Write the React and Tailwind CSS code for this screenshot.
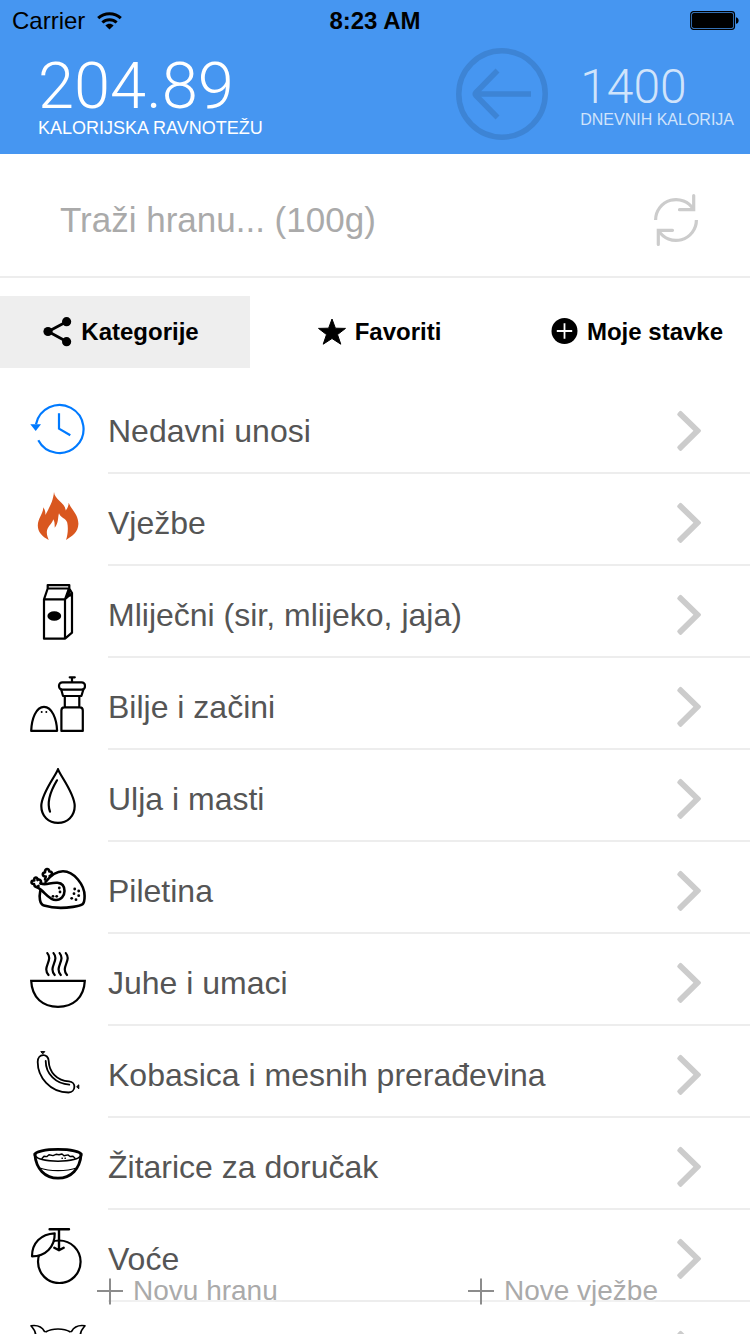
import React from "react";

const line = {
  fill: "none",
  stroke: "#000",
  strokeWidth: 2.2,
  strokeLinecap: "round",
  strokeLinejoin: "round",
};

function Dots({ points, r }) {
  return points.map(([x, y]) => (
    <circle key={`${x}-${y}`} cx={x} cy={y} r={r} fill="#000" stroke="none" />
  ));
}

const icons = {
  recent: (
    <g fill="none" stroke="#007aff" strokeWidth="2.2">
      <path d="M6 24.3A24 24 0 1 1 8.3 40.2" />
      <path d="M29 13.3V28.7L40.3 35.3" />
      <path d="M.3 24.3H11L5.7 31Z" fill="#007aff" stroke="none" />
    </g>
  ),
  exercise: (
    <path
      fill="#d9571f"
      d="M24 0C24.3 7.5 35.3 10.5 35.7 18.5C37.5 16 38.6 14 38.7 10.7C41 17 48.5 22.5 48.4 32C48.2 40 42 44.5 36 47.9C37.8 43 38.4 36 37.2 30.5C35.8 26 30.4 26 29 21.3C27.6 26 28.8 31 24.7 35.7C24.7 32 24.8 30 23.3 27.3C22 32 17.2 34.5 16.8 40C16.8 43 17.8 45.5 18.7 47.9C12 44.5 7.8 40 7.8 33.5C8 26 13 22.5 13.3 15.3C15 18 15.5 20 15.4 23C19 16 23 10 24 0Z"
    />
  ),
  milk: (
    <g {...line}>
      <path d="M14 15.3H35V54.7H14ZM17.7 1.1H39.3V4.5H17.7ZM17.7 4.5L14 15.3M39 4.5L35 15.3L42 9V48.7L35 54.7M39.3 4.5L42 9M39.6 7.5L38 10.5L40 11.5" />
      <ellipse cx="24.3" cy="32" rx="5.8" ry="3.6" fill="#000" />
    </g>
  ),
  spices: (
    <g {...line}>
      <path d="M1.2 54.9C1.6 43 6 30.8 14 30.8S26.7 43 27.1 54.9Z" />
      <path d="M31.4 54.9V34.5Q31.4 31.3 34.4 31.3H49.8Q52.8 31.3 52.8 34.5V54.9ZM34.8 31.3V20H49.3V31.3M31.3 13.7L33 20H51.4L53.3 13.7M42 1.3V6M39.7 1.3H44.8" />
      <rect x="29" y="6.3" width="26" height="7.3" rx="3.4" />
      <Dots r={1} points={[[11.7, 36], [16.3, 36]]} />
    </g>
  ),
  oil: (
    <g {...line}>
      <path d="M28 1.1C27 6 11.3 25 11.3 38C11.3 48 18.5 54.9 28 54.9S44.7 48 44.7 38C44.7 25 29 6 28 1.1Z" />
      <path d="M27 12.3C20 24 16.3 34 20 43.7" />
    </g>
  ),
  chicken: (
    <g {...line} strokeWidth="2.6">
      <path d="M15.5 22C21 15 26 11.3 33 11.3C44 11.3 54.6 25 54.6 36C54.6 45 53 45.5 43 46.9C34 48.3 22 48 14 45.5C9.5 44 9 37 10.3 30.8" />
      <path d="M10.6 23.6C17 25.5 20 22.3 27.5 22.8C33 23.3 34.5 27 34.5 31C34.5 36 31 40 26 40C18 40 14 30 7 27.2" />
      <path d="M10.6 23.4C12 20 9 18.8 7.5 20C7.8 16.5 3.5 16.5 4.3 20.5C.6 20 .6 24.5 4 24C4.5 27 6.5 28 8.5 26" />
      <path d="M15 19.5L15.8 16.5C12.5 16.8 11.5 13 15 12.2C14.8 8.5 19 7.8 19.3 11.5C23 11 22.5 15.3 19.7 16" />
      <Dots
        r={1.4}
        points={[
          [29.3, 28], [30, 32], [26.7, 36.3], [23, 36.3], [44.7, 29], [48.7, 31],
          [44, 33.7], [48.7, 35.7], [41.7, 38.3], [46, 39.7],
        ]}
      />
    </g>
  ),
  soup: (
    <g {...line}>
      <path d="M1.2 28.9H54.8C54 46 43 54.8 28 54.8S2 46 1.2 28.9Z" strokeLinejoin="miter" />
      <path d="M17.3 1.1C23.6 8.5 11.6 15 18.5 23M23.5 1.1C29.8 8.5 17.8 15 24.7 23M29.6 1.1C35.9 8.5 23.9 15 30.8 23M35.8 1.1C42.1 8.5 30.1 15 37 23" />
    </g>
  ),
  sausage: (
    <g {...line} strokeWidth="1.8">
      <path d="M7.7 18C7.7 9 18.5 9 18.7 17C19 28 27 37 39 37.3C46.5 37.8 46 48.3 38.5 48.5C20 48.5 7.7 33 7.7 18Z" />
      <path d="M15.7 17C15.7 30 26 40 39.3 40.7" />
      <path d="M11.2 7.6H14.8L13 9.6ZM46.9 42.5L48.8 40.8V44.4Z" fill="#000" strokeWidth="1" />
    </g>
  ),
  cereal: (
    <g {...line}>
      <path d="M5 19C4 11.5 52 11.5 51 19" strokeWidth="2.8" />
      <path d="M4.8 18C6 33 15 42.2 28 42.2S50 33 51.2 18" strokeWidth="2.8" />
      <path d="M5.2 19.5C9 27 47 27 50.8 19.5" strokeWidth="1.5" />
      <path d="M9 31.7C20 35.6 36 35.6 47.3 31.7" strokeWidth="1.2" />
      <path d="M12 22.5L14 20.2L17 20.6L19 18.7L23 19.6L26 18.3L29 18.8L32 18L34 19.8L38 18.9L40 20.5L43 20.3L45 22.3M32 22.2H32.4M35 22.2H35.4" strokeWidth="1.4" />
    </g>
  ),
  fruit: (
    <g {...line}>
      <circle cx="29.3" cy="33.8" r="21.3" />
      <path d="M29 1.2V22M19.6 1.2H39M24.3 19.7L29 22.2L33.7 19.7" strokeWidth="2.4" />
      <path d="M2 28.3C2 15 11 6 24.7 5.3C25 19 15.5 28.3 2 28.3Z" fill="#fff" />
    </g>
  ),
  meat: (
    <g {...line} strokeWidth="1.6">
      <path d="M5.5 14C5.5 10.5 3 8.5 1 5.8C7.5 4.8 12 7 14.5 11.5M50.5 14C50.5 10.5 53 8.5 55 5.8C48.5 4.8 44 7 41.5 11.5M16 11.8C22 8 34 8 40 11.8" />
      <path d="M5.5 14C0 24 8 46 28 46S56 24 50.5 14" />
    </g>
  ),
};

const categories = [
  { icon: "recent", label: "Nedavni unosi" },
  { icon: "exercise", label: "Vježbe" },
  { icon: "milk", label: "Mliječni (sir, mlijeko, jaja)" },
  { icon: "spices", label: "Bilje i začini" },
  { icon: "oil", label: "Ulja i masti" },
  { icon: "chicken", label: "Piletina" },
  { icon: "soup", label: "Juhe i umaci" },
  { icon: "sausage", label: "Kobasica i mesnih prerađevina" },
  { icon: "cereal", label: "Žitarice za doručak" },
  { icon: "fruit", label: "Voće" },
  { icon: "meat", label: "" },
];

function StatusBar() {
  return (
    <div className="grid h-[42px] grid-cols-3 items-center px-3 text-2xl text-black">
      <div className="flex items-center gap-3">
        <span>Carrier</span>
        <svg width="25" height="18" viewBox="0 0 25 18" aria-hidden="true">
          <g fill="none" stroke="#000" strokeWidth="3">
            <path d="M1.2 6.2C7.5.1 17.5.1 23.8 6.2" />
            <path d="M5.4 10.5C9.4 6.7 15.6 6.7 19.6 10.5" />
          </g>
          <path d="M8.4 13.4C10.8 11.3 14.2 11.3 16.6 13.4L12.5 17.6Z" />
        </svg>
      </div>
      <span className="text-center font-bold">8:23 AM</span>
      <svg className="-mr-0.5 justify-self-end" width="50" height="20" viewBox="0 0 50 20" aria-hidden="true">
        <rect x=".7" y=".7" width="43.8" height="17.6" rx="2.8" fill="none" stroke="#000" strokeWidth="1.2" />
        <rect x="2" y="2" width="41.2" height="15" rx="1.8" />
        <path d="M46 6.2C49.5 6.6 49.5 12.4 46 12.8Z" />
      </svg>
    </div>
  );
}

function Header() {
  return (
    <header className="shrink-0 bg-[#4696f1] text-white">
      <StatusBar />
      <div className="flex h-28 items-start justify-between pr-4 pl-[38px]">
        <div className="pt-3">
          <div className="font-['Roboto',sans-serif] text-[65px] leading-16 font-light">204.89</div>
          <div className="text-lg leading-5">KALORIJSKA RAVNOTEŽU</div>
        </div>
        <div className="flex items-start gap-8">
          <button type="button" aria-label="Natrag" className="pt-1.5">
            <svg width="92" height="92" viewBox="0 0 92 92" fill="none" stroke="#3d84d5" strokeWidth="5.5">
              <circle cx="46" cy="46" r="43.2" />
              <path d="M75 46H20M41.5 22.5L20 44.5Q18.6 46 20 47.5L41.5 69.5" strokeLinejoin="round" />
            </svg>
          </button>
          <div className="pt-5 text-white/75">
            <div className="font-['Roboto',sans-serif] text-5xl leading-[50px] font-light">1400</div>
            <div className="text-base leading-4">DNEVNIH KALORIJA</div>
          </div>
        </div>
      </div>
    </header>
  );
}

function SearchBar() {
  return (
    <form className="flex h-[124px] shrink-0 items-center border-b-2 border-[#ededed] pt-[10px] pr-[51px] pl-[60px]">
      <input
        type="text"
        aria-label="Traži hranu"
        placeholder="Traži hranu... (100g)"
        className="min-w-0 flex-1 bg-transparent text-[35px] leading-10 text-gray-700 outline-none placeholder:text-[#aaaaaa]"
      />
      <button type="button" aria-label="Osvježi">
        <svg width="46" height="52" viewBox="0 0 46 52" fill="none" stroke="#ccc" strokeWidth="3.2">
          <path d="M2.6 26A20.4 20.4 0 0 1 40.5 15.5M43.4 26A20.4 20.4 0 0 1 5.5 36.5" />
          <path d="M40.7 1.6V15.7H26.5M5.3 50.4V36.3H19.5" strokeLinecap="round" />
        </svg>
      </button>
    </form>
  );
}

function Tabs() {
  return (
    <nav className="mt-[18px] mb-[14px] grid shrink-0 grid-cols-3 text-2xl font-bold text-black">
      <button type="button" className="flex h-[72px] items-center justify-center gap-2 bg-[#eeeeee] pr-2 whitespace-nowrap">
        <svg width="30" height="30" viewBox="0 0 30 30" aria-hidden="true">
          <path d="M23.5 4.8L5.2 14.5L23.5 24.6" fill="none" stroke="#000" strokeWidth="2.8" />
          <circle cx="23.6" cy="4.7" r="4.6" />
          <circle cx="5" cy="14.5" r="4.6" />
          <circle cx="23.6" cy="24.7" r="4.6" />
        </svg>
        Kategorije
      </button>
      <button type="button" className="flex h-[72px] items-center justify-center gap-2 pl-2 whitespace-nowrap">
        <svg width="30" height="28" viewBox="0 0 30 28" aria-hidden="true">
          <path d="M15 1L18.4 10.2L28.5 10.4L20.5 16.6L23.8 26.2L15 20.5L6.2 26.2L9.5 16.6L1.5 10.4L11.6 10.2Z" stroke="#000" strokeWidth="1" strokeLinejoin="round" />
        </svg>
        Favoriti
      </button>
      <button type="button" className="flex h-[72px] items-center justify-center gap-2 pl-6 whitespace-nowrap">
        <svg width="28" height="28" viewBox="0 0 28 28" aria-hidden="true">
          <circle cx="13.5" cy="13" r="13" />
          <path d="M13.5 5.3V20.7M5.8 13H21.2" stroke="#fff" strokeWidth="1.8" />
        </svg>
        Moje stavke
      </button>
    </nav>
  );
}

function CategoryRow({ icon, label }) {
  return (
    <li>
      <button type="button" className="flex h-[92px] w-full items-center gap-[22px] pl-[30px] text-left">
        <svg className="shrink-0" width="56" height="56" viewBox="0 0 56 56" aria-hidden="true">
          {icons[icon]}
        </svg>
        <span className="flex h-full min-w-0 flex-1 items-center justify-between border-b-2 border-[#ededed] pt-2 pr-12">
          <span className="text-[32px] leading-10 text-[#555555]">{label}</span>
          <svg width="26" height="42" viewBox="0 0 26 42" aria-hidden="true">
            <path
              fill="#ccc"
              d="M1.7 5.6Q.6 4.4 1.7 3.3L3.2 1.4Q4.4.2 5.6 1.3L24.6 19.7Q25.6 20.7 24.6 21.7L5.6 40.4Q4.4 41.5 3.2 40.3L1.7 38.6Q.6 37.4 1.7 36.2L17.4 20.8Z"
            />
          </svg>
        </span>
      </button>
    </li>
  );
}

function AddButton({ children }) {
  return (
    <button
      type="button"
      className="flex items-center gap-[10px] rounded-full bg-white/20 text-[28px] leading-10 text-[#aaaaaa] [text-shadow:0_0_16px_#fff]"
    >
      <svg width="27" height="27" viewBox="0 0 27 27" stroke="#8c8c8c" strokeWidth="2" aria-hidden="true">
        <path d="M14 .5V26.5M1 13H27" />
      </svg>
      {children}
    </button>
  );
}

export default function App() {
  return (
    <div className="relative flex h-screen flex-col overflow-hidden bg-white font-['Liberation_Sans',Arial,sans-serif]">
      <Header />
      <SearchBar />
      <Tabs />
      <ul className="min-h-0 flex-1 overflow-hidden">
        {categories.map((c) => (
          <CategoryRow key={c.icon} {...c} />
        ))}
      </ul>
      <div className="absolute inset-x-0 bottom-[23px] flex justify-between pr-[92px] pl-24">
        <AddButton>Novu hranu</AddButton>
        <AddButton>Nove vježbe</AddButton>
      </div>
    </div>
  );
}
